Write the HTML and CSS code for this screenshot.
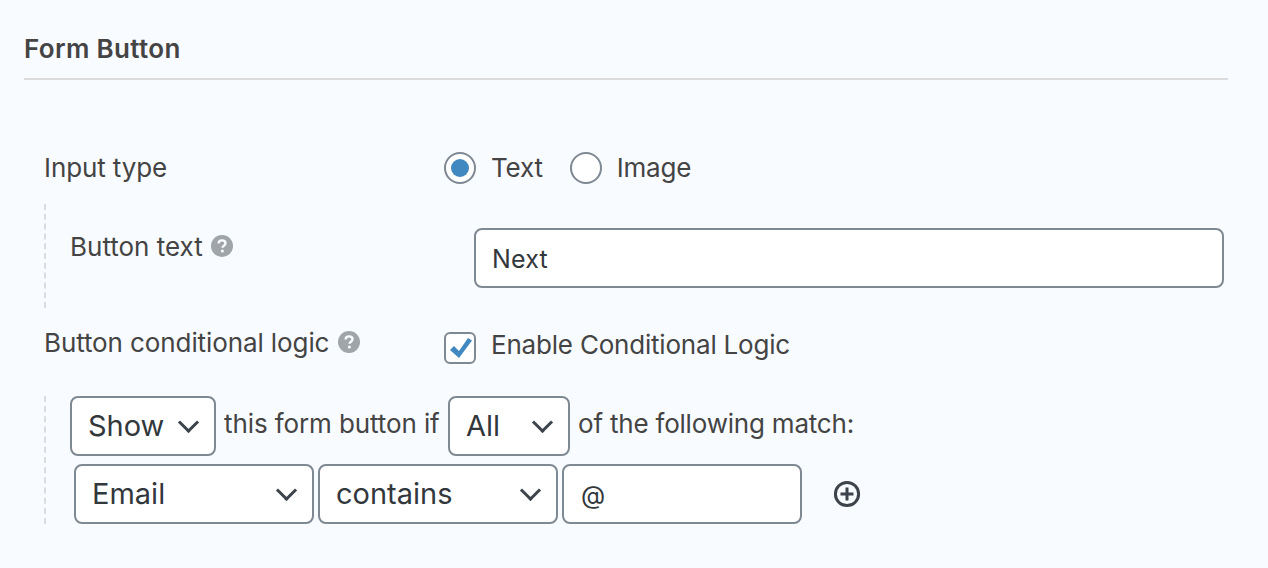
FILE: index.html
```html
<!DOCTYPE html>
<html>

<head>
    <meta charset="UTF-8">
    <title>Form Button</title>
    <link rel="stylesheet" href="styles.css">
</head>

<body>
    <h2 class="title">Form Button</h2>

    <div class="row row-type">
        <div class="label">Input type</div>
        <div class="choices">
            <span class="radio checked"></span><span class="choice">Text</span>
            <span class="radio"></span><span class="choice">Image</span>
        </div>
    </div>

    <div class="sub sub-text">
        <div class="label">Button text
            <svg class="help" viewBox="0 0 22 22"><circle cx="11" cy="11" r="11" fill="#a0a5aa"/><path d="M7.6 8.6c0-2 1.500-3.200 3.500-3.200s3.400 1.100 3.400 2.800c0 2.600-3 2.400-3 4.600" fill="none" stroke="#f8fbff" stroke-width="2.400"/><circle cx="11.400" cy="16" r="1.500" fill="#f8fbff"/></svg>
        </div>
        <input class="text-input next" type="text" value="Next">
    </div>

    <div class="row row-logic">
        <div class="label">Button conditional logic
            <svg class="help" viewBox="0 0 22 22"><circle cx="11" cy="11" r="11" fill="#a0a5aa"/><path d="M7.6 8.6c0-2 1.500-3.200 3.500-3.200s3.400 1.100 3.400 2.800c0 2.600-3 2.400-3 4.600" fill="none" stroke="#f8fbff" stroke-width="2.400"/><circle cx="11.400" cy="16" r="1.500" fill="#f8fbff"/></svg>
        </div>
        <div class="choices">
            <span class="check">
                <svg viewBox="0 0 32 32"><path d="M6 18l4-4 5 5L24 6l4 2.500L15 26z" fill="#4088bf"/></svg>
            </span>
            <span class="choice">Enable Conditional Logic</span>
        </div>
    </div>

    <div class="sub sub-logic">
        <div class="line">
            <div class="select sel-show">Show</div>
            <span class="words-if">this form button if</span>
            <div class="select sel-all">All</div>
            <span class="words-match">of the following match:</span>
        </div>
        <div class="line line-rule">
            <div class="select sel-field">Email</div>
            <div class="select sel-field">contains</div>
            <input class="text-input value" type="text" value="@">
            <svg class="add" viewBox="0 0 28 28"><circle cx="14" cy="14" r="11.600" fill="none" stroke="#3c434a" stroke-width="3"/><path d="M14 7.500v13M7.500 14h13" stroke="#3c434a" stroke-width="3"/></svg>
        </div>
    </div>
</body>

</html>
```

FILE: styles.css
```css
* {box-sizing: border-box;}

body {
    margin: 0;
    padding: 0 40px 0 24px;
    background-color: #f8fbff;
    color: #444;
    font-family: Inter, "Liberation Sans", sans-serif;
    font-size: 26px;
    letter-spacing: -0.1px;
    line-height: 32px;
    overflow: hidden;
}

/* 제목 */
.title {
    margin: 0;
    height: 80px;
    padding-top: 33px;
    border-bottom: 2px solid #dcdcde;
    font-size: 26px;
    font-weight: 600;
    letter-spacing: 0.35px;
}

/* 왼쪽 라벨, 오른쪽 항목 */
.row {
    display: flex;
    padding-left: 20px;
}
.row .label {width: 400px;}
.row-type {margin-top: 72px;}
.row-logic {margin-top: 24px;}
.row-logic .label {margin-top: -5px;}
.row-logic .choice {position: relative; top: -3px;}
.choices {display: flex; align-items: center; height: 32px; letter-spacing: -0.2px;}
.choice {margin-left: 15px; margin-right: 27px;}

/* 라디오, 체크박스 */
.radio {
    width: 32px;
    height: 32px;
    border: 2px solid #7e8993;
    border-radius: 50%;
    background-color: #fff;
    display: flex;
    align-items: center;
    justify-content: center;
}
.radio.checked::before {
    content: "";
    width: 18px;
    height: 18px;
    border-radius: 50%;
    background-color: #4088bf;
}
.check {
    width: 32px;
    height: 32px;
    border: 2px solid #7e8993;
    border-radius: 6px;
    background-color: #fff;
}
.check svg {display: block; width: 32px; height: 32px; margin: -2px;}

.help {
    width: 22px;
    height: 22px;
    vertical-align: -1px;
    margin-left: 1px;
}

/* 점선 들여쓰기 */
.sub {
    margin-left: 20px;
    padding-left: 24px;
    border-left: 2px dashed #dcdcde;
}
.sub-text {
    display: flex;
    margin-top: 20px;
    height: 104px;
    padding-top: 24px;
}
.sub-text .label {width: 404px; margin-top: 3px; letter-spacing: 0;}
.sub-logic {margin-top: 32px; height: 128px;}
.words-if {width: 216px;}
.words-match {letter-spacing: -0.2px;}

/* 입력창, 셀렉트 */
.text-input, .select {
    height: 60px;
    border: 2px solid #7e8993;
    border-radius: 8px;
    background-color: #fff;
    color: #32373c;
    font-family: inherit;
    font-size: 29px;
    letter-spacing: 0;
}
.text-input {padding: 2px 16px 0; outline: none;}
.next {width: 750px; font-size: 25px; letter-spacing: 0.2px;}
.value {width: 240px; padding-left: 17px; font-size: 25px;}

.select {
    display: flex;
    align-items: center;
    padding-left: 16px;
    position: relative;
}
.select::after {
    content: "";
    position: absolute;
    top: 17px;
    right: 18px;
    width: 12px;
    height: 12px;
    border-right: 3px solid #3c434a;
    border-bottom: 3px solid #3c434a;
    transform: rotate(45deg);
}

.line {display: flex; align-items: center; gap: 8px;}
.line span {position: relative; top: -2px;}
.line-rule {gap: 4px; margin-top: 8px; padding-left: 4px;}
.sel-show {width: 146px;}
.sel-all {width: 122px;}
.sel-field {width: 240px;}
.add {width: 28px; height: 28px; margin-left: 27px;}
```
